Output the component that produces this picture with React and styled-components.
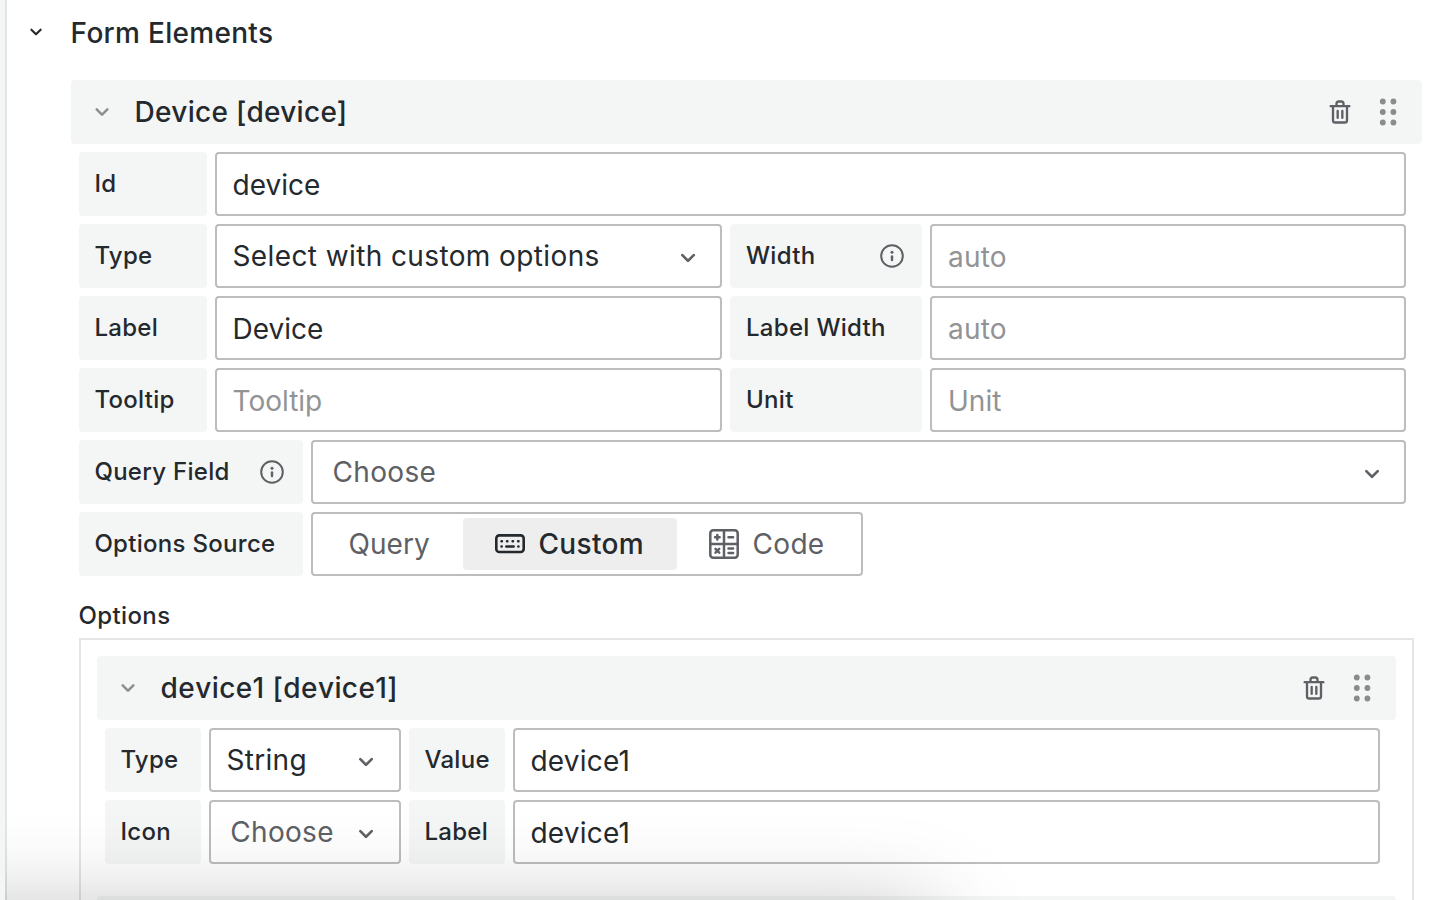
import React from "react";
import styled, { createGlobalStyle } from "styled-components";

const GlobalStyle = createGlobalStyle`
  * { box-sizing: border-box; }
  html, body { margin: 0; height: 100%; overflow: hidden; background: #fff; }
  body {
    font-family: Inter, "Liberation Sans", sans-serif;
    font-size: 28px;
    line-height: 44px;
    letter-spacing: 0.3px;
    color: #24292e;
  }
`;

const Page = styled.div`
  height: 900px;
  overflow: hidden;
  border-left: 5px solid #f4f5f5;
  position: relative;
`;
const Pane = styled.main`
  height: 100%;
  border-left: 2px solid #e4e5e6;
  padding: 0 22px 0 64px;
`;
const SectionTitle = styled.h2`
  display: flex;
  align-items: center;
  gap: 21.6px;
  height: 64px;
  margin: 0 0 16px -48px;
  padding-top: 2px;
  font-size: 28px;
  font-weight: 500;
  letter-spacing: 0.3px;
  svg { position: relative; top: -1px; }
`;
const CardHeader = styled.header`
  display: flex;
  align-items: center;
  height: 64px;
  padding: 0 18px 0 16px;
  margin-bottom: 8px;
  border-radius: 4px;
  background: #f4f5f5;
  color: #24292e;
`;
const CardTitle = styled.span`
  flex: 1;
  margin-left: 17.6px;
  font-weight: 500;
  letter-spacing: ${(p) => p.$spacing}px;
  font-kerning: ${(p) => (p.$kerning ? "normal" : "none")};
`;
const Actions = styled.div`
  display: flex;
  align-items: center;
  gap: 18px;
`;
const Fields = styled.div`
  display: flex;
  flex-direction: column;
  gap: 8px;
  padding: 0 16px 0 8px;
`;
const Row = styled.div`
  display: flex;
  gap: 8px;
  height: 64px;
`;
const Label = styled.label`
  flex: none;
  display: flex;
  align-items: center;
  justify-content: space-between;
  width: ${(p) => p.$width}px;
  padding: 0 ${(p) => p.$right ?? 16}px 0 ${(p) => p.$left ?? 15.4}px;
  border-radius: 4px;
  background: #f4f5f5;
  font-size: 24px;
  font-weight: 500;
  letter-spacing: 0.3px;
  white-space: nowrap;
`;
const Control = styled.div`
  flex: ${(p) => (p.$width ? `0 0 ${p.$width}px` : "1 1 0")};
  min-width: 0;
  display: flex;
  align-items: center;
  justify-content: space-between;
  border: 2px solid #bdbdbe;
  border-radius: 4px;
  background: #fff;
  padding: ${(p) => (p.$select ? "0" : "2px")} ${(p) => p.$right ?? 16}px 0 ${(p) => p.$inset ?? 15.5}px;
  color: ${(p) => p.$color ?? "#24292e"};
  letter-spacing: ${(p) => p.$spacing ?? (p.$select ? 0.3 : 0)}px;
  white-space: nowrap;
  svg { position: relative; top: 2px; }
`;
const Segments = styled.div`
  display: flex;
  width: 552px;
  padding: 4px;
  border: 2px solid #bdbdbe;
  border-radius: 4px;
  background: #fff;
`;
const Segment = styled.button`
  flex: 0 0 ${(p) => p.$width}px;
  display: flex;
  align-items: center;
  gap: 13.5px;
  margin: 0;
  height: 52px;
  padding: 0 0 0 ${(p) => p.$left ?? 32}px;
  border: 0;
  border-radius: 4px;
  font: inherit;
  letter-spacing: ${(p) => p.$spacing ?? 0.32}px;
  font-weight: ${(p) => (p.$active ? 500 : 400)};
  color: ${(p) => (p.$active ? "#24292e" : "#5d6064")};
  background: ${(p) => (p.$active ? "#eeeeee" : "transparent")};
`;
const OptionsTitle = styled.div`
  margin: 20px 0 2px 7.6px;
  height: 40px;
  line-height: 40px;
  font-size: 24px;
  font-weight: 500;
  letter-spacing: 0.36px;
`;
const OptionsBox = styled.section`
  margin: 0 8px;
  height: 300px;
  border: 2px solid #e4e5e6;
  padding: 16px;
`;
const NextHeader = styled.div`
  height: 64px;
  margin-top: 32px;
  border-radius: 4px;
  background: #f4f5f5;
`;
const WindowShadow = styled.div`
  position: absolute;
  left: -200px;
  top: 914px;
  width: 1130px;
  height: 400px;
  border-radius: 20px;
  box-shadow: 0 0 96px rgba(0, 0, 0, 0.27);
  pointer-events: none;
`;

const Chevron = ({ color = "#5d6064", size = 32 }) => (
  <svg width={size} height={size} viewBox="0 0 24 24" fill={color}>
    <path d="M17,9.17a1,1,0,0,0-1.41,0L12,12.71,8.46,9.17a1,1,0,0,0-1.41,0,1,1,0,0,0,0,1.42l4.24,4.24a1,1,0,0,0,1.42,0L17,10.59A1,1,0,0,0,17,9.17Z" />
  </svg>
);
const Info = () => (
  <svg width="28" height="28" viewBox="0 0 28 28" fill="#5d6064">
    <circle cx="14" cy="14" r="10.8" fill="none" stroke="#5d6064" strokeWidth="2" />
    <circle cx="14" cy="10.2" r="1.5" />
    <rect x="12.8" y="13.2" width="2.4" height="6" rx="1.2" />
  </svg>
);
const Trash = () => (
  <svg width="28" height="28" viewBox="0 0 24 24" fill="#5d6064">
    <path d="M10,18a1,1,0,0,0,1-1V11a1,1,0,0,0-2,0v6A1,1,0,0,0,10,18ZM20,6H16V5a3,3,0,0,0-3-3H11A3,3,0,0,0,8,5V6H4A1,1,0,0,0,4,8H5V19a3,3,0,0,0,3,3h8a3,3,0,0,0,3-3V8h1a1,1,0,0,0,0-2ZM10,5a1,1,0,0,1,1-1h2a1,1,0,0,1,1,1V6H10Zm7,14a1,1,0,0,1-1,1H8a1,1,0,0,1-1-1V8H17Zm-3-1a1,1,0,0,0,1-1V11a1,1,0,0,0-2,0v6A1,1,0,0,0,14,18Z" />
  </svg>
);
const Grip = () => (
  <svg width="32" height="32" viewBox="0 0 32 32" fill="#898b8e">
    {[5.5, 16, 26.5].map((y) =>
      [10.8, 21.4].map((x) => <circle key={`${x}-${y}`} cx={x} cy={y} r="2.9" />)
    )}
  </svg>
);
const Keyboard = () => (
  <svg width="30" height="30" viewBox="0 0 30 30" fill="none" stroke="currentColor" strokeWidth="2.6" strokeLinecap="round">
    <rect x="1.3" y="6.4" width="27.4" height="16.6" rx="3" />
    <path d="M6.5 12.2h.4M12 12.2h.4M17.6 12.2h.4M23.1 12.2h.4M6.5 17.4h.2M11.3 17.4h7.4M23.3 17.4h.2" strokeWidth="2.5" />
  </svg>
);
const Calculator = () => (
  <svg width="30" height="30" viewBox="0 0 30 30" fill="none" stroke="currentColor" strokeWidth="2.5" strokeLinecap="round">
    <rect x="1.3" y="1.3" width="27.4" height="27.4" rx="3" />
    <path d="M15 1.5v27M1.5 15h27M6 8.3h4.6M8.3 6v4.6M19.5 8.3h4.6M6.5 19.9l3.7 3.7M10.2 19.9l-3.7 3.7M19.5 19.6h4.6M19.5 23.9h4.6" />
  </svg>
);

const Header = ({ title, kerning = true, spacing = 0.3 }) => (
  <CardHeader>
    <Chevron color="#8b8d90" size={30} />
    <CardTitle $kerning={kerning} $spacing={spacing}>{title}</CardTitle>
    <Actions>
      <Trash />
      <Grip />
    </Actions>
  </CardHeader>
);
const PLACEHOLDER = "#929395";
const MUTED = "#5d6064";

export default function App() {
  return (
    <Page>
      <GlobalStyle />
      <Pane>
        <SectionTitle>
          <Chevron color="#24292e" size={26} />
          Form Elements
        </SectionTitle>
        <Header title="Device [device]" />
        <Fields>
          <Row>
            <Label $width={128}>Id</Label>
            <Control>device</Control>
          </Row>
          <Row>
            <Label $width={128}>Type</Label>
            <Control $width={507} $select $spacing={0.39}>Select with custom options<Chevron /></Control>
            <Label $width={192} $left={16}>Width<Info /></Label>
            <Control $color={PLACEHOLDER} $inset={16} $spacing={0.2}>auto</Control>
          </Row>
          <Row>
            <Label $width={128}>Label</Label>
            <Control $width={507}>Device</Control>
            <Label $width={192} $left={16}>Label Width</Label>
            <Control $color={PLACEHOLDER} $inset={16} $spacing={0.2}>auto</Control>
          </Row>
          <Row>
            <Label $width={128}>Tooltip</Label>
            <Control $width={507} $color={PLACEHOLDER}>Tooltip</Control>
            <Label $width={192} $left={16}>Unit</Label>
            <Control $color={PLACEHOLDER} $inset={16}>Unit</Control>
          </Row>
          <Row>
            <Label $width={224} $right={17}>Query Field<Info /></Label>
            <Control $select $inset={19.6} $color={MUTED}>Choose<Chevron /></Control>
          </Row>
          <Row>
            <Label $width={224}>Options Source</Label>
            <Segments>
              <Segment $width={146} $left={31.5} $spacing={0.05}>Query</Segment>
              <Segment $width={214} $active><Keyboard />Custom</Segment>
              <Segment $width={180}><Calculator />Code</Segment>
            </Segments>
          </Row>
        </Fields>
        <OptionsTitle>Options</OptionsTitle>
        <OptionsBox>
          <Header title="device1 [device1]" kerning={false} spacing={0.42} />
          <Fields>
            <Row>
              <Label $width={96}>Type</Label>
              <Control $width={192} $select $right={17}>String<Chevron /></Control>
              <Label $width={96}>Value</Label>
              <Control $spacing={0.2}>device1</Control>
            </Row>
            <Row>
              <Label $width={96}>Icon</Label>
              <Control $width={192} $select $inset={19.3} $right={17} $color={MUTED}>Choose<Chevron /></Control>
              <Label $width={96}>Label</Label>
              <Control $spacing={0.2}>device1</Control>
            </Row>
          </Fields>
          <NextHeader />
        </OptionsBox>
      </Pane>
      <WindowShadow />
    </Page>
  );
}
